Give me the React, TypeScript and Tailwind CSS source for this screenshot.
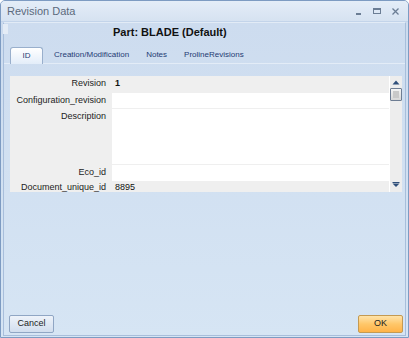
import React from 'react';

const rows = [
  { label: 'Revision', value: '1', h: 'h-[16px]', editable: false, bold: true },
  { label: 'Configuration_revision', value: '', h: 'h-[15px]', editable: true },
  { label: 'Description', value: '', h: 'h-[55px]', editable: true, top: true },
  { label: 'Eco_id', value: '', h: 'h-[16px]', editable: true },
  { label: 'Document_unique_id', value: '8895', h: 'h-[10px]', editable: false, last: true },
];

const tabs = ['Creation/Modification', 'Notes', 'ProlineRevisions'];

const WindowControls = () => (
  <div className="flex items-center gap-[11px] mr-[9px] text-[#6b7d94]">
    <svg width="6" height="8" viewBox="0 0 6 8">
      <rect x="0" y="6" width="5" height="2" fill="currentColor" />
    </svg>
    <svg width="8" height="8" viewBox="0 0 8 8">
      <rect x="0.5" y="1.5" width="7" height="5" fill="none" stroke="currentColor" />
      <rect x="0" y="1" width="8" height="2" fill="currentColor" />
    </svg>
    <svg width="7" height="7" viewBox="0 0 7 7">
      <path d="M0.5 0.5 L6.5 6.5 M6.5 0.5 L0.5 6.5" stroke="currentColor" strokeWidth="1.3" />
    </svg>
  </div>
);

const ScrollBar = () => (
  <div className="w-[13px] h-full flex flex-col items-center bg-[#ededed] border-l border-white">
    <svg className="mt-[4px]" width="8" height="5" viewBox="0 0 8 5">
      <path d="M4 0.5 L7.5 4.5 L0.5 4.5 Z" fill="#2f4f7a" />
    </svg>
    <div className="mt-[3px] w-[12px] h-[13px] border border-[#6e7d93] rounded-[1px] bg-gradient-to-b from-[#f4f4f4] to-[#d8d8d8] p-[2px]">
      <div className="w-full h-full bg-[#c9c9c9]" />
    </div>
    <div className="flex-1" />
    <svg className="mb-[5px]" width="8" height="5" viewBox="0 0 8 5">
      <rect x="0.5" y="0" width="7" height="1" fill="#2f4f7a" />
      <path d="M0.5 1.5 L7.5 1.5 L4 5 Z" fill="#2f4f7a" />
    </svg>
  </div>
);

export default function App() {
  return (
    <div className="w-[409px] h-[338px] flex flex-col border border-[#7d9bc2] rounded-t-[5px] overflow-hidden bg-[#cfdef0] font-['Liberation_Sans',Arial,sans-serif]">
      <div className="h-[21px] flex items-center justify-between bg-gradient-to-b from-[#e4edf8] to-[#d6e2f1] border-b border-[#c3d4ea]">
        <span className="ml-[6px] text-[11px] text-[#5b6a7d]">Revision Data</span>
        <WindowControls />
      </div>

      <div className="flex-1 flex flex-col px-[2px] pb-[1px] bg-gradient-to-b from-[#cddcef] to-[#d6e5f4]">
        <div className="relative flex-1 flex flex-col border-x border-b border-[#a8bedb] border-t border-t-[#e2ebf6]">
          <div className="absolute left-[-1px] top-[1px] w-[5px] h-[10px] bg-[#e4ecf6]" />

          <div className="h-[19px] flex items-center pl-[109px] text-[11px] font-bold text-[#111]">
            Part: BLADE (Default)
          </div>

          <div className="mt-[5px] h-[17px] flex items-end border-b border-[#e3ecf7]">
            <div className="ml-[6px] w-[33px] h-[17px] mb-[-1px] flex items-center justify-center rounded-t-[3px] border border-b-0 border-[#99afcc] bg-gradient-to-b from-[#ffffff] to-[#e3edf9] text-[8px] text-[#1f3b73]">
              ID
            </div>
            <div className="flex h-[17px] items-center text-[8px] text-[#1f3b73]">
              <span className="ml-[11px]">{tabs[0]}</span>
              <span className="ml-[17px]">{tabs[1]}</span>
              <span className="ml-[17px]">{tabs[2]}</span>
            </div>
          </div>

          <div className="ml-[6px] mt-[12px] w-[392px] h-[116px] flex bg-[#efefef] overflow-hidden">
            <div className="flex-1 flex flex-col gap-px">
              {rows.map((r) => (
                <div key={r.label} className={`flex shrink-0 ${r.h}`}>
                  <div
                    className={`w-[102px] shrink-0 pr-[6px] text-right text-[9px] text-[#222] ${
                      r.top ? 'pt-[1px] leading-[12px]' : r.last ? 'leading-[10px]' : 'flex items-center justify-end'
                    }`}
                  >
                    {r.label}
                  </div>
                  <div
                    className={`flex-1 pl-[3px] text-[9px] text-[#111] ${r.editable ? 'bg-white' : ''} ${
                      r.bold ? 'font-bold' : ''
                    } ${r.last ? 'leading-[10px]' : 'flex items-center'}`}
                  >
                    {r.value}
                  </div>
                </div>
              ))}
            </div>
            <ScrollBar />
          </div>

          <div className="flex-1" />

          <div className="flex justify-between items-end px-[4px] pb-[2px]">
            <button className="w-[45px] h-[18px] ml-[1px] rounded-[2px] border border-[#90a6c4] bg-gradient-to-b from-[#eef3fa] to-[#d2deee] text-[9px] text-[#1c1c1c]">
              Cancel
            </button>
            <button className="w-[45px] h-[18px] mr-[-2px] rounded-[2px] border border-[#c49a52] bg-gradient-to-b from-[#ffe3a8] via-[#ffc769] to-[#ffb347] text-[9px] text-[#1c1c1c]">
              OK
            </button>
          </div>
        </div>
      </div>
    </div>
  );
}
